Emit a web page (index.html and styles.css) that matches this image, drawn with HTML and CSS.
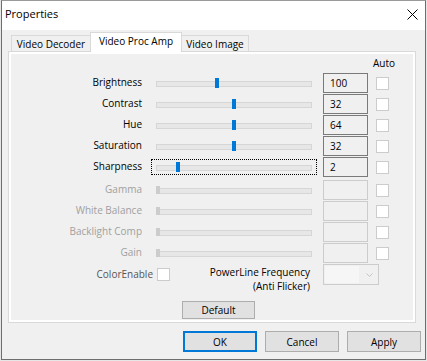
FILE: index.html
```html
<!DOCTYPE html>
<html lang="en">
<head>
    <meta charset="UTF-8">
    <title>Properties</title>
    <link rel="stylesheet" href="styles.css">
</head>
<body>
    <div class="window">
        <div class="titlebar">
            <span class="title">Properties</span>
            <svg class="close" width="11" height="11" viewBox="0 0 11 11">
                <path d="M0.5 0.5 L10.5 10.5 M10.5 0.5 L0.5 10.5" stroke="#000" stroke-width="1" fill="none"/>
            </svg>
        </div>
        <div class="content">
            <div class="tabs">
                <div class="tab tab-decoder">Video Decoder</div>
                <div class="tab tab-amp active">Video Proc Amp</div>
                <div class="tab tab-image">Video Image</div>
            </div>
            <div class="panel">
                <div class="page">
                    <div class="auto-head">Auto</div>

                    <div class="row">
                        <div class="label">Brightness</div>
                        <div class="slider"><span class="thumb" style="left:64px"></span></div>
                        <div class="value">100</div>
                        <div class="check"></div>
                    </div>
                    <div class="row">
                        <div class="label">Contrast</div>
                        <div class="slider"><span class="thumb" style="left:81px"></span></div>
                        <div class="value">32</div>
                        <div class="check"></div>
                    </div>
                    <div class="row">
                        <div class="label">Hue</div>
                        <div class="slider"><span class="thumb" style="left:81px"></span></div>
                        <div class="value">64</div>
                        <div class="check"></div>
                    </div>
                    <div class="row">
                        <div class="label">Saturation</div>
                        <div class="slider"><span class="thumb" style="left:81px"></span></div>
                        <div class="value">32</div>
                        <div class="check"></div>
                    </div>
                    <div class="row">
                        <div class="label">Sharpness</div>
                        <div class="slider focused"><span class="thumb" style="left:25px"></span></div>
                        <div class="value">2</div>
                        <div class="check"></div>
                    </div>

                    <!-- not supported by this device -->
                    <div class="row off first-off">
                        <div class="label">Gamma</div>
                        <div class="slider"><span class="thumb" style="left:5px"></span></div>
                        <div class="value"></div>
                        <div class="check"></div>
                    </div>
                    <div class="row off">
                        <div class="label">White Balance</div>
                        <div class="slider"><span class="thumb" style="left:5px"></span></div>
                        <div class="value"></div>
                        <div class="check"></div>
                    </div>
                    <div class="row off">
                        <div class="label">Backlight Comp</div>
                        <div class="slider"><span class="thumb" style="left:5px"></span></div>
                        <div class="value"></div>
                        <div class="check"></div>
                    </div>
                    <div class="row off">
                        <div class="label">Gain</div>
                        <div class="slider"><span class="thumb" style="left:5px"></span></div>
                        <div class="value"></div>
                        <div class="check"></div>
                    </div>

                    <div class="extra">
                        <div class="ce-label">ColorEnable</div>
                        <div class="check ce-check"></div>
                        <div class="power-label">PowerLine Frequency<br>(Anti Flicker)</div>
                        <div class="combo">
                            <span class="combo-field"></span>
                            <svg class="combo-arrow" width="7" height="4" viewBox="0 0 7 4">
                                <path d="M0.5 0.5 L3.5 3.5 L6.5 0.5" stroke="#c4c4c4" stroke-width="1" fill="none"/>
                            </svg>
                        </div>
                    </div>

                    <button class="btn btn-default">Default</button>
                </div>
            </div>
            <div class="buttons">
                <button class="btn btn-ok">OK</button>
                <button class="btn">Cancel</button>
                <button class="btn">Apply</button>
            </div>
        </div>
    </div>
</body>
</html>
```

FILE: styles.css
```css
* {
    box-sizing: border-box;
}

html, body {
    margin: 0;
}

body {
    background-color: #e6e6e6;
    font-family: "Open Sans", "Liberation Sans", Arial, sans-serif;
    font-size: 10px;
    line-height: 14px;
    color: #000;
}

.window {
    width: 425px;
    height: 360px;
    margin-left: 1px;
    border: 1px solid #6e6e6e;
    border-top-color: #9a9a9a;
    background-color: #f0f0f0;
    display: flex;
    flex-direction: column;
}

.titlebar {
    height: 29px;
    flex: none;
    background-color: #fff;
    display: flex;
    align-items: flex-start;
    padding: 5px 7px 0 3px;
    font-size: 11px;
    line-height: 15px;
}

.close {
    margin-left: auto;
    margin-top: 3px;
    display: block;
}

.content {
    flex: 1;
    padding-left: 6px;
}

/* tab strip */
.tabs {
    height: 21px;
    padding-left: 3px;
    display: flex;
    align-items: flex-end;
}

.tab {
    height: 16px;
    padding-top: 1px;
    border: 1px solid #d9d9d9;
    border-bottom: none;
    text-align: center;
    white-space: nowrap;
}

.tab-decoder {
    width: 80px;
}

.tab-amp {
    width: 92px;
    margin-left: -1px;
}

.tab-image {
    width: 68px;
    margin-left: -1px;
}

.tab.active {
    height: 20px;
    margin-bottom: -1px;
    background-color: #fff;
    position: relative;
    z-index: 1;
}

.panel {
    width: 408px;
    height: 272px;
    border: 1px solid #d9d9d9;
    background-color: #fff;
    padding: 2px;
}

.page {
    height: 100%;
    background-color: #f0f0f0;
    display: flex;
    flex-direction: column;
    align-items: flex-start;
}

.auto-head {
    height: 19px;
    line-height: 18px;
    padding-left: 362px;
}

.row {
    display: flex;
    align-items: center;
    height: 20px;
    margin-bottom: 1px;
}

.row.first-off {
    margin-top: 2px;
}

.label {
    width: 131px;
    text-align: right;
    padding-bottom: 3px;
    white-space: nowrap;
}

.slider {
    width: 166px;
    height: 16px;
    margin-left: 9px;
    position: relative;
    border: 1px solid transparent;
}

.slider::before {
    content: "";
    position: absolute;
    left: 4px;
    right: 4px;
    top: 5px;
    height: 4px;
    background-color: #e7e7e7;
    border: 1px solid #d6d6d6;
}

.slider.focused {
    border: 1px dotted #000;
}

.thumb {
    position: absolute;
    top: 2px;
    width: 4px;
    height: 10px;
    margin-left: -1px;
    background-color: #0078d7;
}

.value {
    width: 45px;
    height: 20px;
    margin-left: 6px;
    border: 1px solid #7a7a7a;
    padding-left: 6px;
    line-height: 18px;
}

.check {
    width: 13px;
    height: 13px;
    margin-left: 8px;
    border: 1px solid #cccccc;
    background-color: #fff;
}

.row.off .label {
    color: #a0a0a0;
}

.row.off .thumb {
    top: 3px;
    height: 8px;
    background-color: #cccccc;
}

.row.off .value {
    border-color: #cccccc;
}

/* ColorEnable + power line row */
.extra {
    display: flex;
    align-items: flex-start;
}

.ce-label {
    width: 142px;
    line-height: 20px;
    text-align: right;
    color: #555;
}

.ce-check {
    margin-left: 4px;
    margin-top: 4px;
}

.power-label {
    width: 140px;
    margin-top: 1px;
    text-align: right;
    white-space: nowrap;
}

.combo {
    width: 56px;
    height: 21px;
    margin-left: 13px;
    border: 1px solid #cccccc;
    background-color: #f0f0f0;
    display: flex;
    align-items: center;
    padding: 1px;
}

.combo-field {
    width: 34px;
    height: 100%;
    background-color: #f6f6f6;
}

.combo-arrow {
    display: block;
    margin-left: 7px;
}

.btn {
    font-family: inherit;
    font-size: 10px;
    color: #000;
    background-color: #e1e1e1;
    border: 1px solid #adadad;
    padding: 0;
    margin: 0;
}

.btn-default {
    width: 73px;
    height: 18px;
    margin-top: 8px;
    margin-left: 171px;
    line-height: 16px;
}

.buttons {
    display: flex;
    justify-content: flex-end;
    gap: 8px;
    margin-top: 8px;
    padding-right: 4px;
}

.buttons .btn {
    width: 74px;
    height: 21px;
}

.btn-ok {
    border-color: #0078d7;
    box-shadow: inset 0 0 0 1px #0078d7;
}
```
